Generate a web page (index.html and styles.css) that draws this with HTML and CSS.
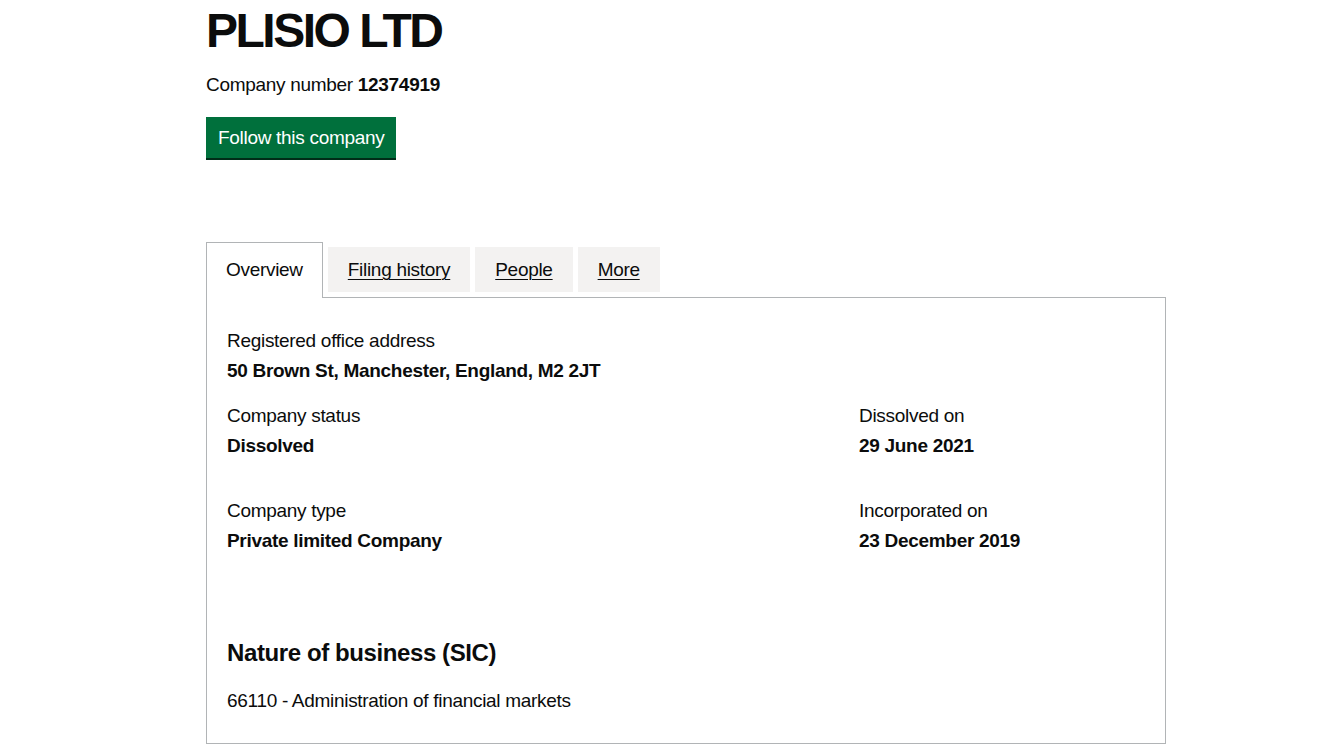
FILE: index.html
```html
<!DOCTYPE html>
<html lang="en">
<head>
<meta charset="utf-8">
<title>PLISIO LTD</title>
<link rel="stylesheet" href="styles.css">
</head>
<body>
<main class="container">
  <h1 class="title">PLISIO LTD</h1>
  <p class="company-number">Company number <strong>12374919</strong></p>
  <a class="button" href="#">Follow this company</a>

  <div class="tabs">
    <ul class="tab-list">
      <li class="tab tab-selected"><span>Overview</span></li>
      <li class="tab"><a href="#">Filing history</a></li>
      <li class="tab"><a href="#">People</a></li>
      <li class="tab"><a href="#">More</a></li>
    </ul>
    <section class="panel">
      <dl class="field address">
        <dt>Registered office address</dt>
        <dd>50 Brown St, Manchester, England, M2 2JT</dd>
      </dl>
      <div class="grid">
        <dl class="field">
          <dt>Company status</dt>
          <dd>Dissolved</dd>
        </dl>
        <dl class="field">
          <dt>Dissolved on</dt>
          <dd>29 June 2021</dd>
        </dl>
        <dl class="field">
          <dt>Company type</dt>
          <dd>Private limited Company</dd>
        </dl>
        <dl class="field">
          <dt>Incorporated on</dt>
          <dd>23 December 2019</dd>
        </dl>
      </div>
      <h2 class="section-heading">Nature of business (SIC)</h2>
      <p class="sic">66110 - Administration of financial markets</p>
    </section>
  </div>
</main>
</body>
</html>
```

FILE: styles.css
```css
* { box-sizing: border-box; }

html, body {
  margin: 0;
  padding: 0;
  background: #ffffff;
}

body {
  font-family: "Liberation Sans", Arial, sans-serif;
  color: #0b0c0c;
  font-size: 19px;
  line-height: 25px;
  letter-spacing: -0.3px;
}

.container {
  width: 960px;
  margin: 0 0 0 206px;
}

.title {
  margin: 6px 0 0;
  font-size: 48px;
  line-height: 50px;
  font-weight: 700;
  letter-spacing: -2.5px;
}

.company-number {
  margin: 16px 0 0;
}

.company-number strong {
  font-weight: 700;
}

.button {
  display: inline-block;
  margin-top: 20px;
  padding: 8px 10px 7px;
  border: 2px solid transparent;
  background: #00703c;
  color: #ffffff;
  text-decoration: none;
  font-size: 19px;
  line-height: 22px;
  box-shadow: 0 2px 0 #002d18;
}

.tabs {
  margin-top: 89px;
}

.tab-list {
  display: flex;
  align-items: flex-start;
  margin: 0;
  padding: 0;
  list-style: none;
}

.tab {
  margin-right: 5px;
  padding: 10px 20px;
  background: #f3f2f1;
}

.tab a {
  color: #0b0c0c;
  text-decoration: underline;
  text-decoration-thickness: 1px;
  text-underline-offset: 3px;
}

.tab-selected {
  position: relative;
  margin-top: -5px;
  margin-bottom: -1px;
  padding: 14px 19px 16px;
  border: 1px solid #b1b4b6;
  border-bottom: 0;
  background: #ffffff;
}

.panel {
  border: 1px solid #b1b4b6;
  padding: 30px 20px 30px;
}

.field {
  margin: 0;
}

.field dt {
  margin: 0 0 5px;
}

.field dd {
  margin: 0;
  font-weight: 700;
}

.address {
  margin-bottom: 20px;
}

.grid {
  display: grid;
  grid-template-columns: 632px 1fr;
  row-gap: 40px;
}

.section-heading {
  margin: 85px 0 0;
  font-size: 24px;
  line-height: 30px;
  font-weight: 700;
  letter-spacing: -0.4px;
}

.sic {
  margin: 20px 0 0;
}
```
